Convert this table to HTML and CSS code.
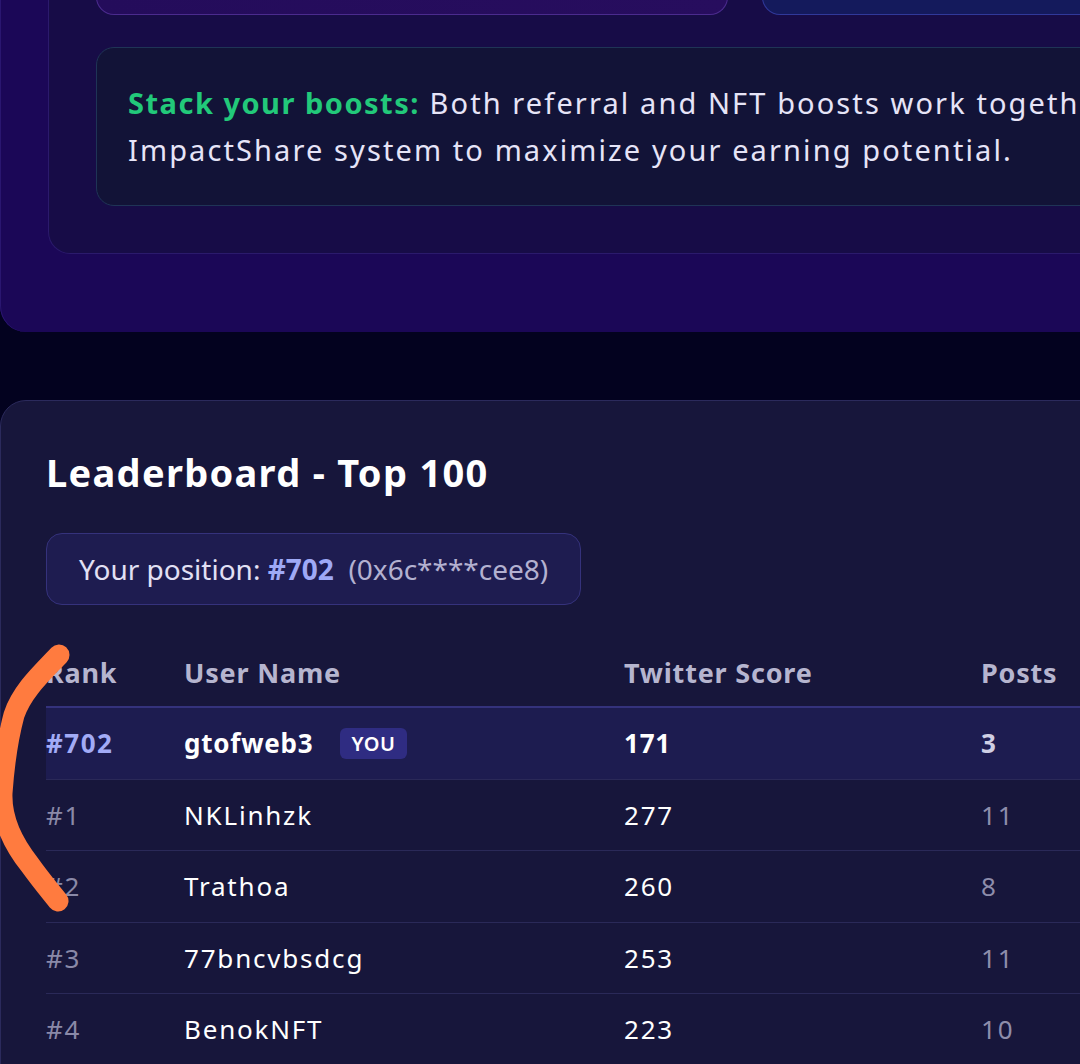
FILE: index.html
```html
<!DOCTYPE html>
<html lang="en">
<head>
<meta charset="utf-8">
<title>Boosts &amp; Leaderboard</title>
<link rel="stylesheet" href="styles.css">
</head>
<body>
<div class="page">
  <section class="boost-panel">
    <div class="boost-card">
      <div class="boost-tiles">
        <div class="tile tile-ref"></div>
        <div class="tile tile-nft"></div>
      </div>
      <div class="stack-note">
        <p><span class="stack-label">Stack your boosts:</span> Both referral and NFT boosts work together in the<br>ImpactShare system to maximize your earning potential.</p>
      </div>
    </div>
  </section>

  <section class="leaderboard">
    <h2 class="lb-title">Leaderboard - Top 100</h2>
    <div class="position-pill">Your position: <span class="pos-rank">#702</span>&nbsp; <span class="pos-addr">(0x6c****cee8)</span></div>

    <div class="lb-table">
      <div class="lb-row lb-head">
        <div class="c-rank">Rank</div>
        <div class="c-name">User Name</div>
        <div class="c-score">Twitter Score</div>
        <div class="c-posts">Posts</div>
      </div>
      <div class="lb-row lb-me">
        <div class="c-rank">#702</div>
        <div class="c-name">gtofweb3 <span class="you-badge">YOU</span></div>
        <div class="c-score">171</div>
        <div class="c-posts">3</div>
      </div>
      <div class="lb-row">
        <div class="c-rank">#1</div>
        <div class="c-name">NKLinhzk</div>
        <div class="c-score">277</div>
        <div class="c-posts">11</div>
      </div>
      <div class="lb-row">
        <div class="c-rank">#2</div>
        <div class="c-name">Trathoa</div>
        <div class="c-score">260</div>
        <div class="c-posts">8</div>
      </div>
      <div class="lb-row">
        <div class="c-rank">#3</div>
        <div class="c-name">77bncvbsdcg</div>
        <div class="c-score">253</div>
        <div class="c-posts">11</div>
      </div>
      <div class="lb-row">
        <div class="c-rank">#4</div>
        <div class="c-name">BenokNFT</div>
        <div class="c-score">223</div>
        <div class="c-posts">10</div>
      </div>
    </div>
  </section>

  <svg class="scribble" width="80" height="280" viewBox="0 0 80 280" aria-hidden="true">
    <path d="M59 22 C42 40 22 58 14 82 C7 108 4 132 2 160 C1 186 14 212 30 232 C40 246 50 258 58 268" fill="none" stroke="#ff7b3f" stroke-width="21" stroke-linecap="round" stroke-linejoin="round"/>
  </svg>
</div>
</body>
</html>
```

FILE: styles.css
```css
html, body {
  margin: 0;
  padding: 0;
  background: #03021f;
  overflow: hidden;
}
body {
  width: 1080px;
  height: 1064px;
  font-family: "Noto Sans", "DejaVu Sans", sans-serif;
  color: #e4e2f6;
}
.page {
  position: relative;
  width: 1080px;
  height: 1064px;
  overflow: hidden;
}

/* Boost panel */
.boost-panel {
  width: 1240px;
  margin-top: -120px;
  padding: 0 0 78px 48px;
  background: #1b0757;
  box-shadow: inset 1px 0 0 #2a1670;
  border-radius: 0 0 26px 26px;
  box-sizing: border-box;
}
.boost-card {
  background: #170c47;
  border: 1px solid #2b1a6c;
  border-top: none;
  border-radius: 0 0 22px 22px;
  padding: 0 0 47px 47px;
}
.boost-tiles {
  display: grid;
  grid-template-columns: 632px 1fr;
  gap: 34px;
  height: 135px;
}
.tile {
  border-radius: 0 0 18px 18px;
  border: 1px solid transparent;
  border-top: none;
}
.tile-ref {
  background: linear-gradient(90deg, #240c5b, #270d5e);
  border-color: #4b2b8e;
}
.tile-nft {
  background: #141a5c;
  border-color: #30399a;
}
.stack-note {
  margin-top: 32px;
  background: #121337;
  border: 1px solid #1f3456;
  border-radius: 18px;
  padding: 31px 31px 32px 31px;
}
.stack-note p {
  margin: 0;
  font-size: 29px;
  line-height: 47px;
  letter-spacing: 2.1px;
  color: #e6e4f7;
  white-space: nowrap;
}
.stack-label {
  color: #22c97a;
  font-weight: 700;
  letter-spacing: 1.5px;
}

/* Leaderboard */
.leaderboard {
  width: 1240px;
  margin-top: 68px;
  background: #17163b;
  border: 1px solid #2b2a5c;
  border-radius: 26px;
  padding: 45px 0 40px 45px;
  box-sizing: border-box;
}
.lb-title {
  margin: 0;
  font-size: 38px;
  line-height: 52px;
  font-weight: 700;
  letter-spacing: 1.3px;
  color: #ffffff;
}
.position-pill {
  display: inline-block;
  margin-top: 35px;
  height: 72px;
  line-height: 70px;
  padding: 0 32px;
  box-sizing: border-box;
  background: #1e1c50;
  border: 1px solid #35327c;
  border-radius: 16px;
  font-size: 28px;
  color: #e2e0f4;
}
.pos-rank {
  color: #9ea9f6;
  font-weight: 700;
}
.pos-addr {
  color: #b3b1d0;
}

.lb-table {
  margin-top: 33px;
}
.lb-row {
  display: grid;
  grid-template-columns: 138px 440px 357px 1fr;
  align-items: center;
  height: 71.5px;
  box-sizing: border-box;
  border-bottom: 1px solid #2a2958;
  font-size: 26px;
  letter-spacing: 1.8px;
  color: #ffffff;
}
.lb-head {
  height: 70px;
  border-bottom: 2px solid #34327c;
  font-weight: 700;
  font-size: 27px;
  letter-spacing: 0.8px;
  color: #b6b5cf;
}
.lb-row .c-rank { color: #8a89a8; }
.lb-head .c-rank { color: #b6b5cf; }
.lb-row .c-posts { color: #8e8dab; }
.lb-head .c-posts { color: #b6b5cf; }
.lb-me {
  background: #1d1c50;
  font-weight: 700;
  letter-spacing: 0.8px;
}
.lb-me .c-rank { color: #a2abf6; letter-spacing: 1.5px; }
.lb-me .c-posts { color: #cfcfe4; }
.c-name {
  display: flex;
  align-items: center;
  gap: 26px;
}
.you-badge {
  display: inline-block;
  background: #2f2c82;
  color: #ffffff;
  font-size: 20px;
  font-weight: 600;
  letter-spacing: 0.5px;
  line-height: 31px;
  padding: 0 12px;
  border-radius: 6px;
}

.scribble {
  position: absolute;
  left: 0;
  top: 633px;
  overflow: visible;
}
```
